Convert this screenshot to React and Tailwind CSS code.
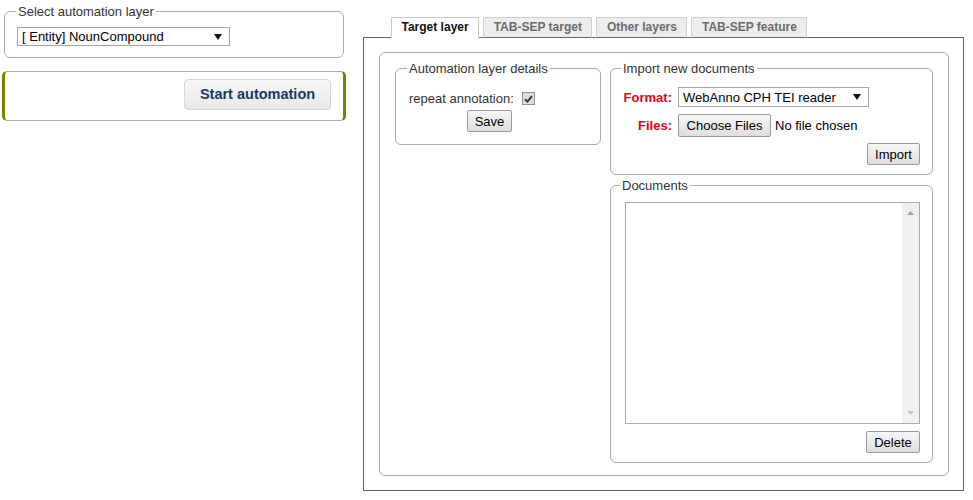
import React from "react";

function DownArrow() {
  return (
    <svg width="8" height="6" viewBox="0 0 8 6" className="shrink-0">
      <path d="M0 0 H8 L4 6 Z" fill="#111" />
    </svg>
  );
}

function FakeSelect({ text, className }) {
  return (
    <div
      className={`flex items-center justify-between border border-[#a6a6a6] bg-white pl-[4px] pr-[7px] text-[13px] leading-none text-black ${className}`}
    >
      <span>{text}</span>
      <DownArrow />
    </div>
  );
}

function Btn({ children, className }) {
  return (
    <button
      type="button"
      className={`flex items-center justify-center rounded-[2px] border border-[#9a9a9a] bg-[linear-gradient(#f6f6f6,#dedede)] text-[13px] leading-none text-black ${className}`}
    >
      {children}
    </button>
  );
}

function Tab({ label, active }) {
  return active ? (
    <div className="flex h-[21px] items-center border border-b-white border-[#c8c8c8] bg-white px-[9.5px] text-[12px] font-bold text-[#111]">
      {label}
    </div>
  ) : (
    <div className="flex h-[21px] items-center border border-[#cfcfcf] border-b-[#666] bg-[#ededed] px-[9.5px] text-[12px] font-bold text-[#6b6b6b]">
      {label}
    </div>
  );
}

export default function App() {
  return (
    <div className="flex h-[500px] w-[973px] items-start bg-white font-['Liberation_Sans',Arial,sans-serif] text-[13px] leading-[15px] text-[#333]">
      {/* Left column */}
      <div className="w-[363px] shrink-0">
        <fieldset className="ml-[4px] mt-[4px] w-[340px] rounded-[6px] border border-[#aaa] pb-[11px] pl-[12px] pt-[8px]">
          <legend className="-ml-[1px] px-[2px] leading-[15px] text-[#333]">Select automation layer</legend>
          <FakeSelect text="[ Entity] NounCompound" className="h-[19px] w-[213px]" />
        </fieldset>

        <div className="ml-[2px] mt-[13px] flex h-[50px] w-[344px] items-start justify-end rounded-[5px] border border-[#aaa] border-x-[3px] border-x-[#808000] pr-[12px] pt-[7px]">
          <button
            type="button"
            className="flex h-[31px] w-[147px] items-center justify-center rounded-[4px] border border-[#d6d6d6] bg-[linear-gradient(#f7f7f7,#e8e8e8)] text-[14.5px] font-bold text-[#173a63]"
          >
            Start automation
          </button>
        </div>
      </div>

      {/* Right column */}
      <div className="w-[601px] shrink-0 pt-[17px]">
        <div className="relative z-10 -mb-px flex gap-[4px] pl-[28px]">
          <Tab label="Target layer" active />
          <Tab label="TAB-SEP target" />
          <Tab label="Other layers" />
          <Tab label="TAB-SEP feature" />
        </div>

        <div className="h-[454px] border border-[#666] pb-[14px] pl-[15px] pr-[14px] pt-[14px]">
          <div className="flex h-[424px] gap-[9px] rounded-[6px] border border-[#aaa] px-[15px] pt-[8px]">
            {/* Automation layer details */}
            <div className="w-[206px] shrink-0">
              <fieldset className="rounded-[6px] border border-[#aaa] pb-[12px] pl-[13px] pt-[15px]">
                <legend className="-ml-[2px] px-[2px] leading-[15px] text-[#333]">Automation layer details</legend>
                <div className="flex h-[15px] items-center gap-[8px]">
                  <span>repeat annotation:</span>
                  <span className="flex h-[13px] w-[13px] items-center justify-center border border-[#8f8f8f] bg-[#dcdcdc]">
                    <svg width="9" height="8" viewBox="0 0 9 8">
                      <path d="M1 4.2 L3.4 6.6 L8 1.2" fill="none" stroke="#3a3a3a" strokeWidth="2" />
                    </svg>
                  </span>
                </div>
                <Btn className="ml-[58px] mt-[4px] h-[22px] w-[45px]">Save</Btn>
              </fieldset>
            </div>

            {/* Right fieldsets */}
            <div className="w-[323px] shrink-0">
              <fieldset className="rounded-[6px] border border-[#aaa] pb-[9px] pl-[12px] pr-[12px] pt-[11px]">
                <legend className="-ml-[2px] px-[2px] leading-[15px] text-[#333]">Import new documents</legend>
                <div className="flex h-[20px] items-center gap-[6px]">
                  <span className="w-[49px] text-right font-bold text-[#e8001a]">Format:</span>
                  <FakeSelect text="WebAnno CPH TEI reader" className="h-[20px] w-[191px]" />
                </div>
                <div className="mt-[7px] flex h-[23px] items-center gap-[6px]">
                  <span className="w-[49px] text-right font-bold text-[#e8001a]">Files:</span>
                  <Btn className="h-[23px] w-[93px]">Choose Files</Btn>
                  <span className="-ml-[2px] text-black">No file chosen</span>
                </div>
                <div className="mt-[6px] flex justify-end">
                  <Btn className="h-[22px] w-[53px]">Import</Btn>
                </div>
              </fieldset>

              <fieldset className="mt-[3px] rounded-[6px] border border-[#aaa] pb-[9px] pl-[14px] pr-[12px] pt-[9px]">
                <legend className="-ml-[5px] px-[2px] leading-[15px] text-[#333]">Documents</legend>
                <div className="flex h-[222px] w-[295px] border border-[#aaa] bg-white">
                  <div className="flex-1" />
                  <div className="flex w-[17px] flex-col items-center justify-between bg-[#f0f0f0] py-[8px]">
                    <svg width="7" height="4" viewBox="0 0 7 4">
                      <path d="M0 4 L3.5 0 L7 4 Z" fill="#a3a3a3" />
                    </svg>
                    <svg width="7" height="4" viewBox="0 0 7 4">
                      <path d="M0 0 L7 0 L3.5 4 Z" fill="#c3c3c3" />
                    </svg>
                  </div>
                </div>
                <div className="mt-[7px] flex justify-end">
                  <Btn className="h-[22px] w-[54px]">Delete</Btn>
                </div>
              </fieldset>
            </div>
          </div>
        </div>
      </div>
    </div>
  );
}
